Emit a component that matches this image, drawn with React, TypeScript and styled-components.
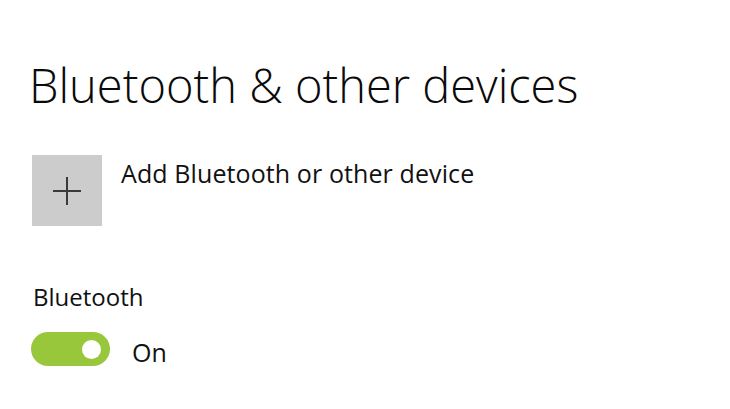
import React, { useState } from 'react'
import styled, { createGlobalStyle } from 'styled-components'

const GlobalStyle = createGlobalStyle`
  html, body {
    margin: 0;
    padding: 0;
    background: #ffffff;
  }
  body {
    font-family: 'Open Sans', 'Noto Sans', sans-serif;
    color: #000000;
  }
`

const Page = styled.div`
  width: 730px;
  height: 409px;
  padding: 55px 0 0 29px;
  box-sizing: border-box;
  overflow: hidden;
`

const Title = styled.h1`
  margin: 0;
  font-size: 47px;
  font-weight: 300;
  line-height: 60px;
  color: #0a0a0a;
`

const AddRow = styled.div`
  display: flex;
  align-items: flex-start;
  gap: 19px;
  margin-top: 40px;
  margin-left: 3px;
`

const AddTile = styled.button`
  width: 70px;
  height: 71px;
  border: none;
  padding: 0;
  background: #cccccc;
  display: flex;
  align-items: center;
  justify-content: center;
  cursor: pointer;
`

const AddLabel = styled.span`
  font-size: 25px;
  line-height: 30px;
  color: #111111;
  margin-top: 3px;
  letter-spacing: 0.1px;
`

const Section = styled.div`
  margin-top: 56px;
  margin-left: 2px;
`

const SectionLabel = styled.div`
  font-size: 24px;
  line-height: 30px;
  color: #111111;
  padding-left: 2px;
`

const ToggleRow = styled.div`
  display: flex;
  align-items: flex-start;
  gap: 22px;
  margin-top: 20px;
`

const Switch = styled.button<{ $on: boolean }>`
  width: 79px;
  height: 34px;
  border-radius: 17px;
  border: none;
  padding: 0 9px;
  background: ${(p) => (p.$on ? '#98c73b' : '#cccccc')};
  display: flex;
  align-items: center;
  justify-content: ${(p) => (p.$on ? 'flex-end' : 'flex-start')};
  cursor: pointer;
`

const Knob = styled.span`
  width: 19px;
  height: 19px;
  border-radius: 50%;
  background: #ffffff;
`

const StateText = styled.span`
  font-size: 25px;
  line-height: 33px;
  padding-top: 4px;
  color: #111111;
`

const App = () => {
  const [on, setOn] = useState<boolean>(true)

  return (
    <>
      <GlobalStyle />
      <Page>
        <Title>Bluetooth &amp; other devices</Title>
        <AddRow>
          <AddTile aria-label="Add device">
            <svg width="30" height="30" viewBox="0 0 30 30">
              <path d="M15 1v28M1 15h28" stroke="#3a3a3a" strokeWidth="2" fill="none" />
            </svg>
          </AddTile>
          <AddLabel>Add Bluetooth or other device</AddLabel>
        </AddRow>
        <Section>
          <SectionLabel>Bluetooth</SectionLabel>
          <ToggleRow>
            <Switch $on={on} onClick={() => setOn(!on)}>
              <Knob />
            </Switch>
            <StateText>{on ? 'On' : 'Off'}</StateText>
          </ToggleRow>
        </Section>
      </Page>
    </>
  )
}

export default App
